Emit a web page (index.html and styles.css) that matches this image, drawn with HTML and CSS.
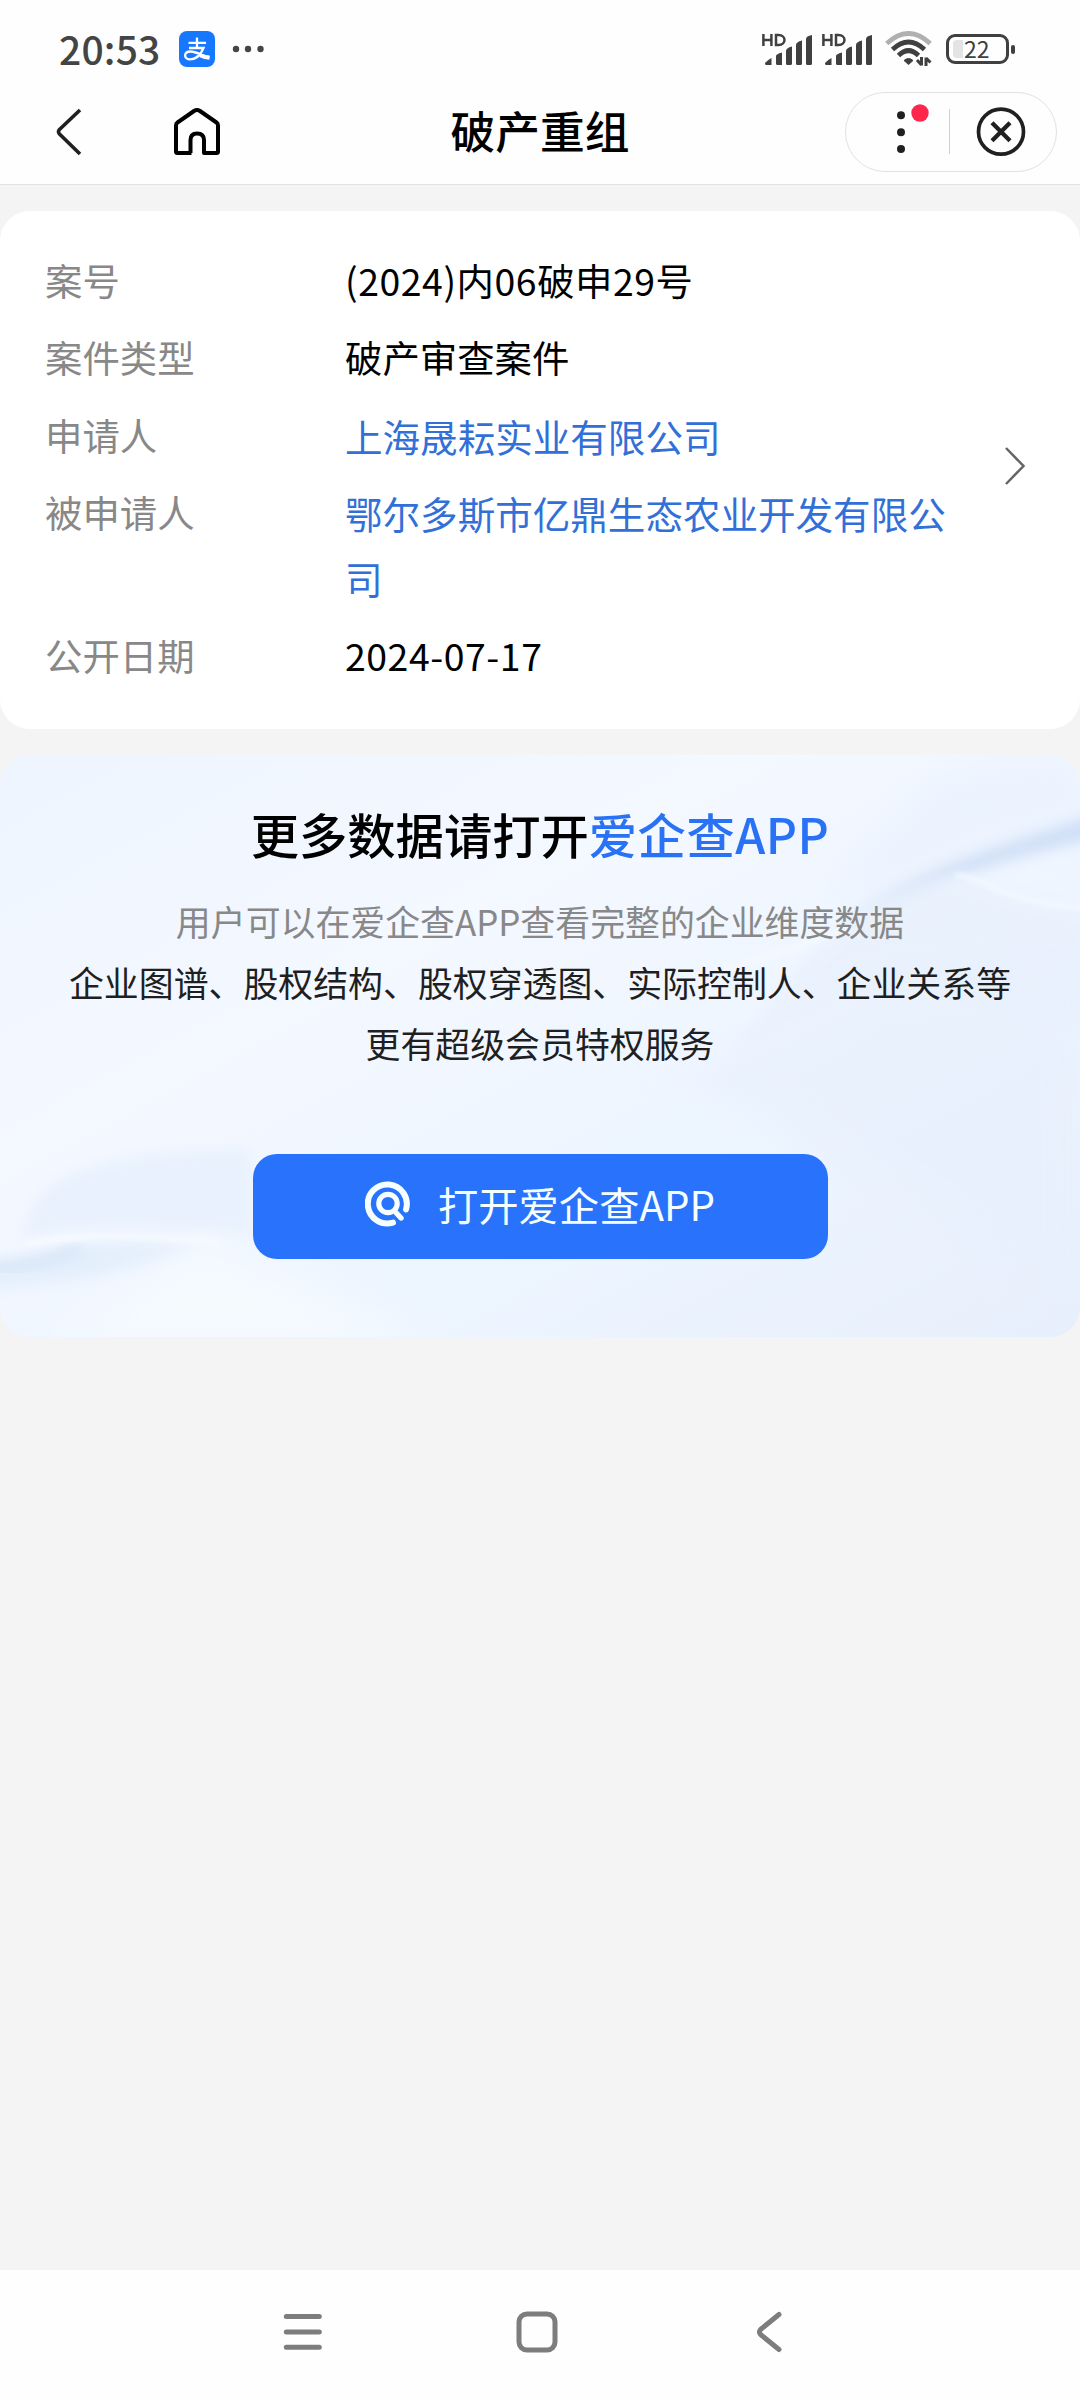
FILE: index.html
```html
<!DOCTYPE html>
<html lang="zh-CN">
<head>
<meta charset="utf-8">
<title>破产重组</title>
<link rel="stylesheet" href="styles.css">
</head>
<body>
<div class="screen">
  <header class="top">
    <div class="status">
      <span class="time">20:53</span>
      <svg class="pay" width="36" height="36" viewBox="0 0 36 36">
        <rect width="36" height="36" rx="8" fill="#1677ff"/>
        <g fill="none" stroke="#fff" stroke-linecap="butt">
          <path d="M9.500 11.800H27M18 6.500V17" stroke-width="2.300"/>
          <path d="M10 17H24.500C22.500 22 18 28.500 10.500 28.300C4.500 28 4.500 20.500 11.500 20.500C18 20.500 23 25 30.500 26" stroke-width="2.300"/>
          <path d="M21 24.200Q26 26.500 30.500 26.800" stroke-width="4"/>
        </g>
      </svg>
      <svg class="dots" width="32" height="8" viewBox="0 0 32 8" fill="#454545"><circle cx="4" cy="4" r="3.200"/><circle cx="16" cy="4" r="3.200"/><circle cx="28.500" cy="4" r="3.200"/></svg>
      <div class="system">
        <svg class="signal" width="50" height="33" viewBox="0 0 50 33" fill="none" stroke="#404040">
          <path d="M1.400 1V13M9.400 1V13M1.400 7H9.400M14 2.100H16.500C24.500 2.100 24.500 12 16.500 12H14Z" stroke-width="2.500"/>
          <path d="M3 30.500Q3 29 9.500 25V32H4.500Q3 32 3 30.500ZM14 23Q14 21 20 19.500V32H15.500Q14 32 14 30.500ZM24 18Q24 15 30 13.500V30.500Q30 32 28.500 32H25.500Q24 32 24 30.500ZM34 12Q34 9 40 7.500V30.500Q40 32 38.500 32H35.500Q34 32 34 30.500ZM44 6Q44 3 50 2V30.500Q50 32 48.500 32H45.500Q44 32 44 30.500Z" fill="#404040" stroke="none"/>
        </svg>
        <svg class="signal" width="50" height="33" viewBox="0 0 50 33" fill="none" stroke="#404040">
          <path d="M1.400 1V13M9.400 1V13M1.400 7H9.400M14 2.100H16.500C24.500 2.100 24.500 12 16.500 12H14Z" stroke-width="2.500"/>
          <path d="M3 30.500Q3 29 9.500 25V32H4.500Q3 32 3 30.500ZM14 23Q14 21 20 19.500V32H15.500Q14 32 14 30.500ZM24 18Q24 15 30 13.500V30.500Q30 32 28.500 32H25.500Q24 32 24 30.500ZM34 12Q34 9 40 7.500V30.500Q40 32 38.500 32H35.500Q34 32 34 30.500ZM44 6Q44 3 50 2V30.500Q50 32 48.500 32H45.500Q44 32 44 30.500Z" fill="#404040" stroke="none"/>
        </svg>
        <svg class="wifi" width="47" height="36" viewBox="0 0 47 36" fill="none" stroke-width="4.800">
          <path d="M1.800 12.500Q23.500 -7.500 45.200 12.500" stroke="#b0b0b0"/>
          <path d="M7.500 18.500Q23.500 3.500 39.500 18.500" stroke="#404040"/>
          <path d="M13.500 24.500Q23.500 14.800 33.500 24.500" stroke="#404040"/>
          <path d="M19 29.500Q23.500 25.500 28 29.500L23.500 33.500Z" fill="#404040" stroke="#404040" stroke-width="1"/>
          <path d="M36.500 26V34.500M36.500 34L32 29M41 35V26.500M41 27L45.500 31.500" stroke="#404040" stroke-width="3"/>
        </svg>
        <div class="battery"><div class="cell"><span class="charge"></span><span class="percent">22</span></div><span class="tip"></span></div>
      </div>
    </div>
    <div class="titlebar">
      <div class="left">
        <svg width="26" height="48" viewBox="0 0 26 48"><path d="M24 2L3.500 21.500Q1.500 23.700 3.500 26L24 46" fill="none" stroke="#202020" stroke-width="3.600"/></svg>
        <svg class="house" width="46" height="48" viewBox="0 0 46 48"><path d="M17.500 45H3.500Q2 45 2 43.500V17.500Q2 15.500 3.500 14.500L20 3Q23 1.200 26 3L42.500 14.500Q44 15.500 44 17.500V43.500Q44 45 42.500 45H30V32Q30 25.500 23 25.500Q16.500 25.500 16.500 32V45" fill="none" stroke="#000" stroke-width="4" stroke-linejoin="round"/></svg>
      </div>
      <h1>破产重组</h1>
      <div class="right">
        <div class="capsule">
          <svg width="210" height="78" viewBox="0 0 210 78">
            <g fill="#202020"><circle cx="55" cy="22.300" r="4"/><circle cx="55" cy="39.300" r="4"/><circle cx="55" cy="56" r="4"/></g>
            <circle cx="74" cy="20" r="8.700" fill="#ff264c"/>
            <path d="M103.500 16V61" stroke="#d0d0d0" stroke-width="1"/>
            <circle cx="155" cy="38.700" r="22.500" fill="none" stroke="#202020" stroke-width="3.700"/>
            <path d="M146 29.700L164 47.700M164 29.700L146 47.700" stroke="#202020" stroke-width="4.300"/>
          </svg>
        </div>
      </div>
    </div>
  </header>
  <main>
    <section class="case">
      <dl>
        <div class="row"><dt>案号</dt><dd class="latin">(2024)内06破申29号</dd></div>
        <div class="row"><dt>案件类型</dt><dd>破产审查案件</dd></div>
        <div class="row"><dt>申请人</dt><dd class="link">上海晟耘实业有限公司</dd></div>
        <div class="row"><dt>被申请人</dt><dd class="link">鄂尔多斯市亿鼎生态农业开发有限公司</dd></div>
        <div class="row"><dt>公开日期</dt><dd class="latin">2024-07-17</dd></div>
      </dl>
      <svg class="arrow" width="22" height="40" viewBox="0 0 22 40"><path d="M2 2L19.500 20L2 38" fill="none" stroke="#666" stroke-width="2.500"/></svg>
    </section>
    <section class="promo">
      <svg class="silk" width="1080" height="582" viewBox="0 0 1080 582">
        <defs>
          <linearGradient id="base" x1="0" y1="0" x2="1" y2="1"><stop offset="0" stop-color="#eef5ff"/><stop offset=".35" stop-color="#f4f8ff"/><stop offset=".65" stop-color="#edf5ff"/><stop offset="1" stop-color="#e8effc"/></linearGradient>
          <linearGradient id="fold" gradientUnits="userSpaceOnUse" x1="1080" y1="70" x2="800" y2="190"><stop offset="0" stop-color="#cfdff7"/><stop offset=".6" stop-color="#d5e2f6"/><stop offset="1" stop-color="#e5effd" stop-opacity="0"/></linearGradient>
          <filter id="fine" x="-30%" y="-30%" width="160%" height="160%"><feGaussianBlur stdDeviation="2.500"/></filter>
          <filter id="soft" x="-30%" y="-30%" width="160%" height="160%"><feGaussianBlur stdDeviation="7"/></filter>
          <filter id="wide" x="-30%" y="-30%" width="160%" height="160%"><feGaussianBlur stdDeviation="18"/></filter>
        </defs>
        <rect width="1080" height="582" fill="url(#base)"/>
        <path d="M840 120L930 30Q980 0 1090 10V60Q980 80 920 120L850 150Z" fill="#ebf3fe" filter="url(#wide)"/>
        <path d="M1095 60Q1010 85 955 106Q895 130 850 160L810 190Q880 165 955 125Q1020 100 1095 84Z" fill="url(#fold)" filter="url(#soft)"/>
        <path d="M850 165Q910 120 965 120Q1010 143 1095 153V280Q960 230 850 240L730 300L800 210Z" fill="#e9f1fd" opacity=".8" filter="url(#soft)"/>
        <path d="M955 120Q975 122 1000 136Q1040 150 1085 153" fill="none" stroke="#f5f9ff" stroke-width="4" filter="url(#fine)"/>
        <path d="M725 213Q780 200 850 172" fill="none" stroke="#f5f9ff" stroke-width="5" filter="url(#fine)"/>
        <path d="M870 230Q800 290 670 322L760 350L1080 560V210Z" fill="#e8f0fd" opacity=".75" filter="url(#wide)"/>
        <path d="M30 460Q50 395 250 395V480Q100 460 20 484Z" fill="#e8f1fd" filter="url(#soft)"/>
        <path d="M-10 510Q40 507 75 490Q100 484 200 490Q150 520 -10 535Z" fill="#e4effc" filter="url(#soft)"/>
        <path d="M-10 512Q40 510 80 493" fill="none" stroke="#d3e2f4" stroke-width="9" filter="url(#soft)"/>
        <path d="M25 489Q60 482 100 481T220 487" fill="none" stroke="#f7faff" stroke-width="5" filter="url(#fine)"/>
        <path d="M50 590L200 490L440 590Z" fill="#f5faff" filter="url(#wide)"/>
      </svg>
      <h2>更多数据请打开<span class="brand">爱企查APP</span></h2>
      <p class="hint">用户可以在爱企查APP查看完整的企业维度数据</p>
      <p>企业图谱、股权结构、股权穿透图、实际控制人、企业关系等</p>
      <p>更有超级会员特权服务</p>
      <button class="open">
        <svg width="46" height="46" viewBox="0 0 46 46" fill="none" stroke="#f5ffff" stroke-linecap="round">
          <path d="M41 28.500A19.500 19.500 0 1 0 28 41.600" stroke-width="6"/>
          <circle cx="23" cy="22.500" r="9.200" stroke-width="5.200"/>
          <path d="M29.500 30L36 37" stroke-width="5.400"/>
        </svg>
        <span>打开爱企查APP</span>
      </button>
    </section>
  </main>
  <nav class="keys">
    <svg width="40" height="44" viewBox="0 0 40 44"><path d="M3.300 6.500H36.300M3.300 22H36.300M3.300 37.300H36.300" stroke="#7d7d7d" stroke-width="5" stroke-linecap="round"/></svg>
    <svg width="42" height="44" viewBox="0 0 42 44"><rect x="3" y="4" width="36" height="36" rx="8" fill="none" stroke="#7d7d7d" stroke-width="5"/></svg>
    <svg class="back" width="27" height="44" viewBox="0 0 27 44"><path d="M23 4.500L4.500 19.500Q2.500 22 4.500 24.500L23 39.500" fill="none" stroke="#7d7d7d" stroke-width="5" stroke-linecap="round"/></svg>
  </nav>
</div>
</body>
</html>
```
FILE: styles.css
```css
* { box-sizing: border-box; margin: 0; padding: 0; }
body { font-family: "Noto Sans CJK SC", sans-serif; background: #f4f4f4; color: #000; }
.screen { width: 1080px; height: 2400px; display: flex; flex-direction: column; }
.top { height: 185px; background: #fefefe; border-bottom: 1px solid #e2e2e2; }
.status { height: 92px; padding: 6px 65px 0 59px; display: flex; align-items: center; }
.time { font-size: 39px; font-weight: 500; line-height: 50px; color: #444; width: 120px; letter-spacing: .2px; margin-bottom: 3px; }
.dots { margin-left: 17px; }
.system { margin-left: auto; display: flex; align-items: center; }
.signal { margin-right: 10px; }
.wifi { margin: 0 14px 0 3px; }
.battery { display: flex; align-items: center; gap: 2px; }
.cell { width: 63px; height: 30px; border: 3px solid #404040; border-radius: 9px; display: flex; align-items: center; padding-left: 4px; }
.charge { width: 10px; height: 18px; border-radius: 4px 0 0 4px; background: #e4e4e4; }
.percent { font-size: 23px; line-height: 24px; font-weight: 400; color: #404040; margin: 0 0 2px 1px; }
.tip { width: 4px; height: 9px; border-radius: 2px; background: #404040; }
.titlebar { height: 80px; display: grid; grid-template-columns: 1fr auto 1fr; align-items: center; padding: 0 23px 0 56px; }
.left { display: flex; align-items: center; gap: 92px; }
.titlebar h1 { font-size: 44.700px; font-weight: 500; line-height: 64px; margin: 0 33px 4px 0; }
.right { display: flex; justify-content: flex-end; }
.capsule { width: 212px; height: 80px; border: 1px solid #e2e2e2; border-radius: 40px; }
.capsule svg { display: block; }
main { flex: 1; padding-top: 26px; }
.case { height: 518px; background: #fff; border-radius: 30px; display: flex; align-items: center; justify-content: space-between; padding: 0 54px 5px 45px; }
.row { display: flex; font-size: 37.400px; line-height: 65px; margin-bottom: 12.500px; }
.row:last-child { margin-bottom: 0; }
dt { width: 300px; color: #888; }
dd { width: 605px; }
.latin { letter-spacing: .55px; }
.link { color: #3270d8; font-size: 37.550px; }
.arrow { margin-bottom: 3px; }
.promo { position: relative; z-index: 0; height: 582px; margin-top: 26px; border-radius: 30px; overflow: hidden; display: flex; flex-direction: column; align-items: center; padding-top: 43px; }
.silk { position: absolute; inset: 0; z-index: -1; }
.promo h2 { font-size: 48.300px; line-height: 70px; font-weight: 500; margin-bottom: 23px; }
.brand { color: #2a72f5; letter-spacing: .5px; }
.promo p { font-size: 34.900px; line-height: 61px; color: #1f1f1f; white-space: nowrap; }
.promo .hint { color: #888; }
.open { width: 575px; height: 105px; margin-top: 80px; padding-bottom: 5px; border: 0; border-radius: 24px; background: #2972fb; color: #f5ffff; font-family: inherit; font-size: 40.300px; line-height: 60px; display: flex; align-items: center; justify-content: center; gap: 27px; }
.keys { height: 130px; background: #fefefe; display: flex; justify-content: center; padding: 40px 14px 0 0; gap: 193px; }
.back { margin-left: 5px; }
```
